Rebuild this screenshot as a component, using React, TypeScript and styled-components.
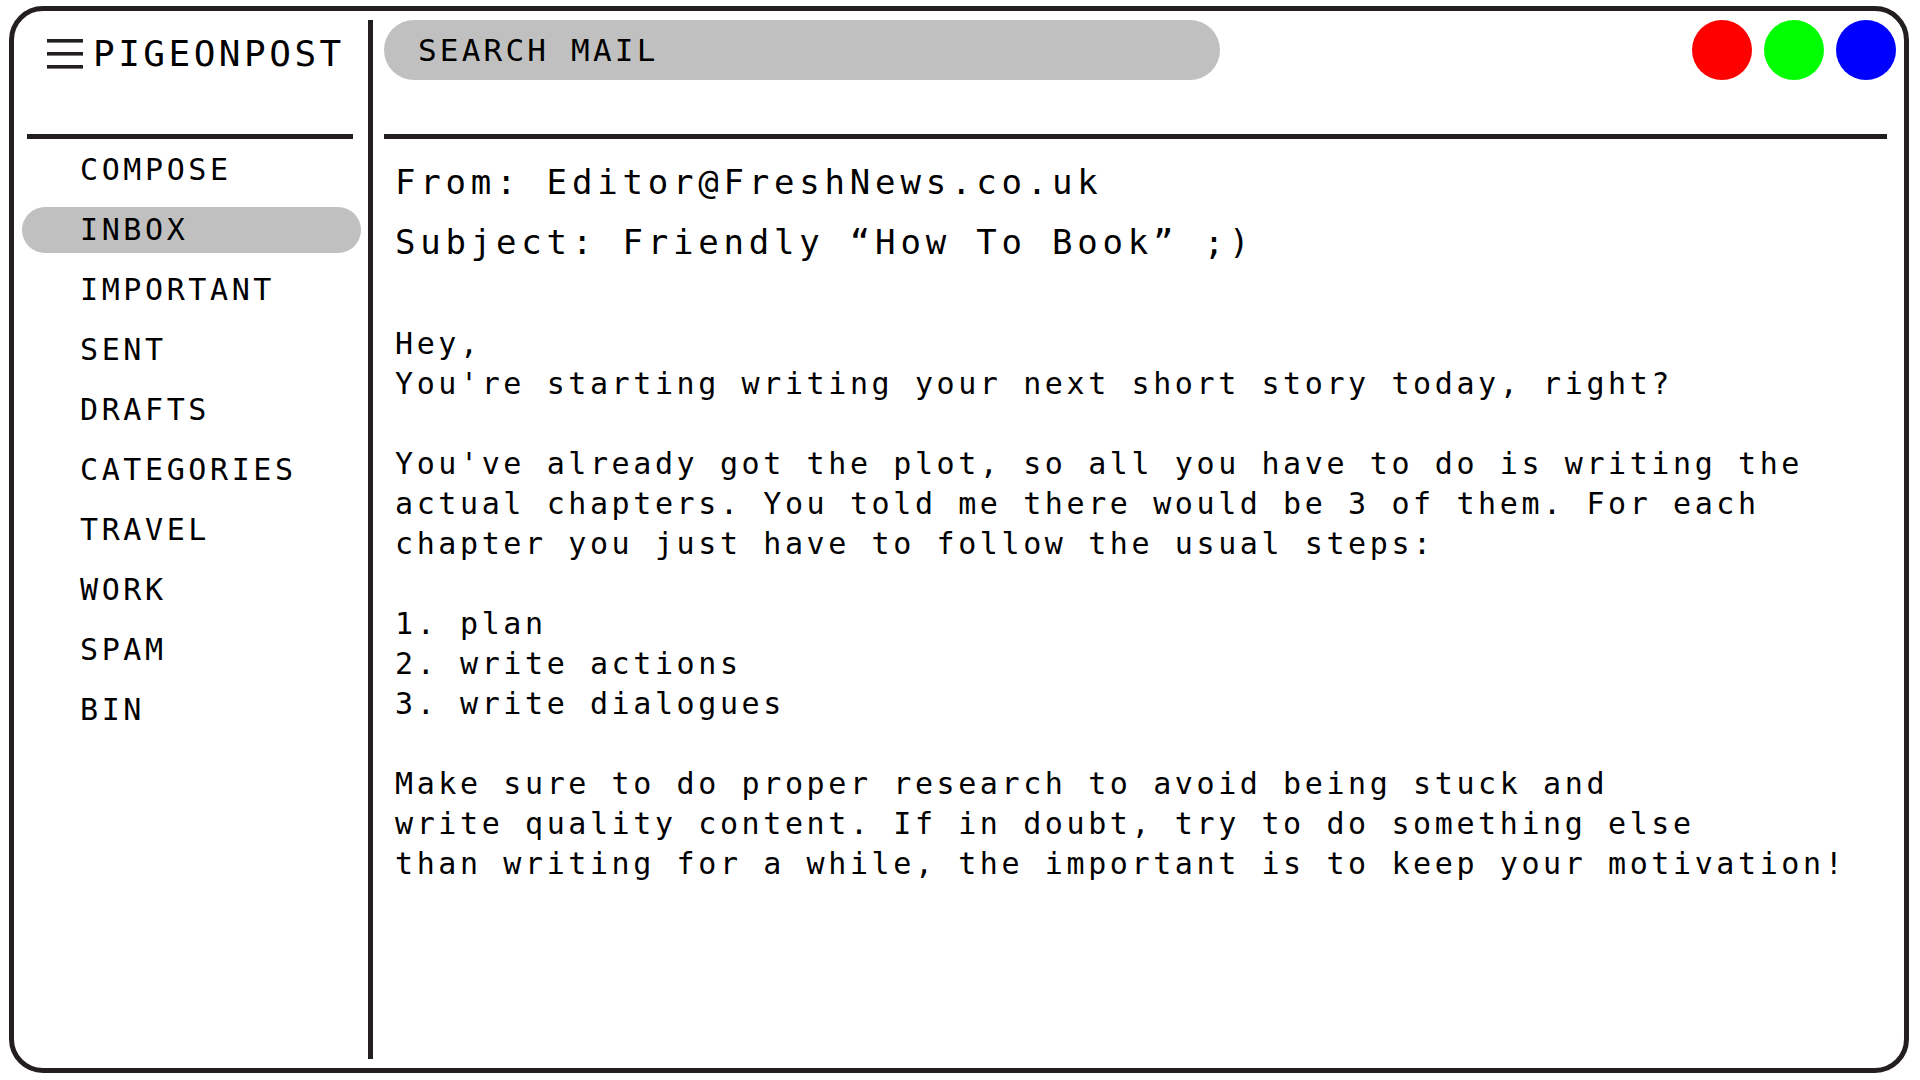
import React from 'react';
import styled, { createGlobalStyle } from 'styled-components';

const GlobalStyle = createGlobalStyle`
  html, body {
    margin: 0;
    padding: 0;
    background: #ffffff;
  }
  body {
    font-family: "DejaVu Sans Mono", "Liberation Mono", monospace;
    color: #000000;
  }
`;

const INK = '#231f20';
const PILL = '#c0c0c0';

const folders = [
  'COMPOSE',
  'INBOX',
  'IMPORTANT',
  'SENT',
  'DRAFTS',
  'CATEGORIES',
  'TRAVEL',
  'WORK',
  'SPAM',
  'BIN',
];

const message = `Hey,
You're starting writing your next short story today, right?

You've already got the plot, so all you have to do is writing the
actual chapters. You told me there would be 3 of them. For each
chapter you just have to follow the usual steps:

1. plan
2. write actions
3. write dialogues

Make sure to do proper research to avoid being stuck and
write quality content. If in doubt, try to do something else
than writing for a while, the important is to keep your motivation!`;

const App: React.FC = () => {
  return (
    <Page>
      <GlobalStyle />
      <Frame>
        <Sidebar>
          <Brand>
            <svg width="36" height="30" viewBox="0 0 36 30" aria-hidden="true">
              <rect x="0" y="0" width="36" height="3.6" fill={INK} />
              <rect x="0" y="13" width="36" height="3.6" fill={INK} />
              <rect x="0" y="26" width="36" height="3.6" fill={INK} />
            </svg>
            <Logo>PIGEONPOST</Logo>
          </Brand>
          <SideRule />
          <NavList>
            {folders.map((name) => (
              <NavItem key={name} $active={name === 'INBOX'}>
                {name}
              </NavItem>
            ))}
          </NavList>
        </Sidebar>

        <Divider />

        <Main>
          <TopBar>
            <Search>SEARCH MAIL</Search>
            <Dots>
              <Dot $color="#ff0000" />
              <Dot $color="#00ff00" />
              <Dot $color="#0000ff" />
            </Dots>
          </TopBar>
          <MainRule />
          <Header>
            <HeaderLine>From: Editor@FreshNews.co.uk</HeaderLine>
            <HeaderLine>Subject: Friendly “How To Book” ;)</HeaderLine>
          </Header>
          <Body>{message}</Body>
        </Main>
      </Frame>
    </Page>
  );
};

const Page = styled.div`
  box-sizing: border-box;
  width: 1920px;
  height: 1080px;
  padding: 6px 11px 7px 9px;
`;

const Frame = styled.div`
  box-sizing: border-box;
  height: 100%;
  border: 5px solid ${INK};
  border-radius: 34px;
  display: flex;
  overflow: hidden;
`;

const Sidebar = styled.aside`
  width: 354px;
  flex-shrink: 0;
  padding-top: 9px;
  display: flex;
  flex-direction: column;
`;

const Brand = styled.div`
  height: 68px;
  padding-left: 33px;
  display: flex;
  align-items: center;
  gap: 10px;

  svg {
    display: block;
    flex-shrink: 0;
  }
`;

const Logo = styled.span`
  font-size: 36px;
  letter-spacing: 3.5px;
  line-height: 68px;
`;

const SideRule = styled.div`
  margin: 46px 0 0 13px;
  width: 326px;
  height: 5px;
  background: ${INK};
`;

const NavList = styled.nav`
  margin-top: 8px;
  display: flex;
  flex-direction: column;
  gap: 14px;
`;

const NavItem = styled.div<{ $active?: boolean }>`
  box-sizing: border-box;
  margin-left: 8px;
  width: 339px;
  height: 46px;
  padding-left: 58px;
  border-radius: 23px;
  background: ${(p) => (p.$active ? PILL : 'transparent')};
  font-size: 30px;
  letter-spacing: 3.6px;
  line-height: 46px;
  white-space: nowrap;
`;

const Divider = styled.div`
  width: 5px;
  flex-shrink: 0;
  margin: 9px 0;
  background: ${INK};
`;

const Main = styled.main`
  flex: 1;
  min-width: 0;
  padding: 9px 8px 0 11px;
  display: flex;
  flex-direction: column;
`;

const TopBar = styled.div`
  height: 60px;
  display: flex;
  align-items: center;
  justify-content: space-between;
`;

const Search = styled.div`
  box-sizing: border-box;
  width: 836px;
  height: 60px;
  padding-left: 34px;
  border-radius: 30px;
  background: ${PILL};
  font-size: 31px;
  letter-spacing: 3.2px;
  line-height: 60px;
`;

const Dots = styled.div`
  display: flex;
  gap: 12px;
`;

const Dot = styled.span<{ $color: string }>`
  width: 60px;
  height: 60px;
  border-radius: 50%;
  background: ${(p) => p.$color};
`;

const MainRule = styled.div`
  margin: 54px 9px 0 0;
  height: 5px;
  background: ${INK};
`;

const Header = styled.div`
  margin-top: 13px;
  padding-left: 11px;
`;

const HeaderLine = styled.div`
  font-size: 34px;
  letter-spacing: 4.8px;
  line-height: 60px;
  white-space: nowrap;
`;

const Body = styled.div`
  margin-top: 52px;
  padding-left: 11px;
  font-size: 30px;
  letter-spacing: 3.6px;
  line-height: 40px;
  white-space: pre;
`;

export default App;
